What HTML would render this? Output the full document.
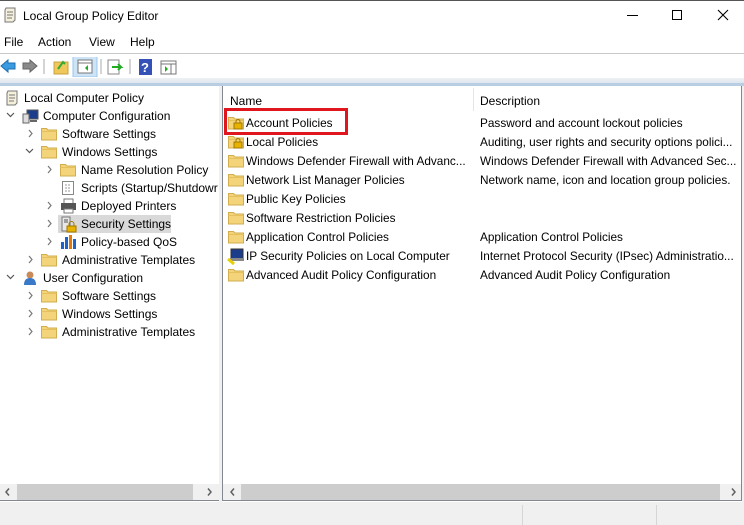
<!DOCTYPE html>
<html><head><style>
*{margin:0;padding:0;box-sizing:border-box}
body{width:744px;height:525px;background:#fff;font-family:"Liberation Sans",sans-serif;font-size:12px;color:#000;position:relative;overflow:hidden}
.abs{position:absolute}
.t{position:absolute;white-space:nowrap;line-height:16px}
</style></head><body>
<div class="abs" style="left:0;top:0;width:744px;height:1px;background:#555"></div>
<!-- title -->
<svg class="abs" style="left:3px;top:7px" width="14" height="16" viewBox="0 0 14 16"><path d="M3 1h9v12l-2 2H2V3z" fill="#f5f0dc" stroke="#777"/><path d="M4 5h6M4 8h6M4 11h5" stroke="#777"/></svg>
<div class="t" style="left:23px;top:8px">Local Group Policy Editor</div>
<div class="abs" style="left:627px;top:15px;width:11px;height:1px;background:#000"></div>
<div class="abs" style="left:672px;top:10px;width:10px;height:10px;border:1px solid #000"></div>
<svg class="abs" style="left:717px;top:9px" width="12" height="12"><path d="M1 1L11 11M11 1L1 11" stroke="#000" stroke-width="1.1"/></svg>
<!-- menu -->
<div class="t" style="left:4px;top:34px">File</div>
<div class="t" style="left:38px;top:34px">Action</div>
<div class="t" style="left:89px;top:34px">View</div>
<div class="t" style="left:130px;top:34px">Help</div>
<div class="abs" style="left:0;top:53px;width:744px;height:1px;background:#c8c8c8"></div>
<!-- toolbar -->
<svg class="abs" style="left:0;top:57px" width="190" height="20">
<path d="M1 9l7-6v3h7v6H8v3z" fill="#3a9be0" stroke="#1f6fb0"/>
<path d="M37 9l-7-6v3h-7v6h7v3z" fill="#8a8a8a" stroke="#666"/>
<path d="M44 2v15" stroke="#aaa"/>
<rect x="54" y="5" width="14" height="12" fill="#f0c85a" stroke="#c9a040"/><path d="M58 12l5-7 2 2" stroke="#3a3" stroke-width="2" fill="none"/>
<rect x="73" y="-2" width="24" height="22" fill="#cde4f7" stroke="#99c6ec"/>
<rect x="78" y="3" width="14" height="13" fill="#fff" stroke="#777"/><path d="M78 6h14" stroke="#777"/><path d="M88 8l-3 3 3 3z" fill="#2a2"/>
<path d="M101 2v15" stroke="#aaa"/>
<rect x="108" y="3" width="11" height="14" fill="#fff" stroke="#888"/><path d="M112 10h9l-3-3M121 10l-3 3" stroke="#2a2" stroke-width="2" fill="none"/>
<path d="M130 2v15" stroke="#aaa"/>
<rect x="139" y="2" width="13" height="16" fill="#3451b8"/><text x="141" y="15" fill="#fff" font-size="13" font-weight="bold" font-family="Liberation Sans">?</text>
<rect x="161" y="4" width="15" height="13" fill="#fff" stroke="#777"/><path d="M161 7h15M171 7v10" stroke="#777"/><path d="M165 9l3 3-3 3z" fill="#2a2"/>
</svg>
<div class="abs" style="left:0;top:78px;width:744px;height:5px;background:linear-gradient(#eef1f4,#dde6ef)"></div>
<div class="abs" style="left:0;top:83px;width:744px;height:3px;background:#b9cde3"></div>
<!-- left pane -->
<div class="abs" style="left:0;top:86px;width:220px;height:415px;border:1px solid #828790;border-top:none;border-left:none;background:#fff"></div>
<div class="abs" style="left:219px;top:86px;width:3px;height:416px;background:#f0f0f0"></div>
<!-- right pane -->
<div class="abs" style="left:222px;top:86px;width:520px;height:415px;border:1px solid #828790;border-top:none;background:#fff"></div>
<div class="abs" style="left:742px;top:86px;width:2px;height:416px;background:#f0f0f0"></div>

<!-- tree -->
<svg class="abs" style="left:5px;top:90px" width="14" height="16"><path d="M3 1h9v12l-2 2H2V3z" fill="#f5f0dc" stroke="#777"/><path d="M4 5h6M4 8h6M4 11h5" stroke="#777"/></svg>
<div class="t" style="left:24px;top:90px">Local Computer Policy</div>

<svg class="abs" style="left:22px;top:108px" width="17" height="16"><rect x="5" y="2" width="11" height="9" fill="#1c3e8a" stroke="#555"/><rect x="1" y="6" width="6" height="9" fill="#ddd" stroke="#666"/><path d="M8 13h7" stroke="#666" stroke-width="2"/></svg>
<div class="t" style="left:43px;top:108px">Computer Configuration</div>

<div class="t" style="left:62px;top:126px">Software Settings</div>
<div class="t" style="left:62px;top:144px">Windows Settings</div>
<div class="t" style="left:81px;top:162px">Name Resolution Policy</div>
<svg class="abs" style="left:61px;top:180px" width="14" height="16"><rect x="1.5" y="1.5" width="11" height="13" fill="#fff" stroke="#888"/><path d="M4 5h6M4 8h6M4 11h6" stroke="#999" stroke-dasharray="2 1"/></svg>
<div class="t" style="left:81px;top:180px">Scripts (Startup/Shutdowr</div>
<svg class="abs" style="left:60px;top:198px" width="17" height="16"><rect x="4" y="1" width="9" height="5" fill="#fff" stroke="#777"/><rect x="1" y="5" width="15" height="7" fill="#555"/><rect x="4" y="11" width="9" height="4" fill="#fff" stroke="#777"/></svg>
<div class="t" style="left:81px;top:198px">Deployed Printers</div>
<div class="abs" style="left:58px;top:215px;width:113px;height:18px;background:#d9d9d9"></div>
<svg class="abs" style="left:60px;top:216px" width="17" height="17"><rect x="2" y="1" width="8" height="14" fill="#e8e8e8" stroke="#777"/><path d="M4 4h4M4 6h4" stroke="#555"/><rect x="7" y="10" width="9" height="6" fill="#e8b200" stroke="#a07800"/><path d="M9 10V8a2.5 2.5 0 015 0v2" stroke="#a07800" fill="none"/></svg>
<div class="t" style="left:81px;top:216px">Security Settings</div>
<svg class="abs" style="left:60px;top:234px" width="17" height="16"><rect x="1" y="8" width="3" height="7" fill="#1e64c8"/><rect x="5" y="3" width="3" height="12" fill="#1e64c8"/><rect x="9" y="1" width="3" height="14" fill="#e07a10"/><rect x="13" y="5" width="3" height="10" fill="#1e64c8"/></svg>
<div class="t" style="left:81px;top:234px">Policy-based QoS</div>
<div class="t" style="left:62px;top:252px">Administrative Templates</div>
<svg class="abs" style="left:22px;top:270px" width="17" height="16"><circle cx="8" cy="5" r="3.5" fill="#c98a5a"/><path d="M2 15q0-7 6-7t6 7z" fill="#3a78c8"/></svg>
<div class="t" style="left:43px;top:270px">User Configuration</div>
<div class="t" style="left:62px;top:288px">Software Settings</div>
<div class="t" style="left:62px;top:306px">Windows Settings</div>
<div class="t" style="left:62px;top:324px">Administrative Templates</div>

<svg class="abs" style="left:0;top:86px" width="219" height="260">
<defs><g id="f"><path d="M0.5 2.5h5l1.5 1.5h8.5v10h-15z" fill="#f3d47a" stroke="#d1ad4e"/><path d="M0.5 5.5h15" stroke="#e6c05c"/></g>
<path id="cr" d="M0 0l3 3.5-3 3.5" fill="none" stroke="#777" stroke-width="1.2"/>
<path id="cd" d="M0 0l3.5 3.5 3.5-3.5" fill="none" stroke="#555" stroke-width="1.2"/></defs>
<use href="#cr" x="29" y="44"/><use href="#f" x="41" y="40"/>
<use href="#cd" x="26" y="63"/><use href="#f" x="41" y="58"/>
<use href="#cr" x="48" y="80"/><use href="#f" x="60" y="76"/>
<use href="#cr" x="48" y="116"/>
<use href="#cr" x="48" y="134"/>
<use href="#cr" x="48" y="152"/>
<use href="#cr" x="29" y="170"/><use href="#f" x="41" y="166"/>
<use href="#cr" x="29" y="206"/><use href="#f" x="41" y="202"/>
<use href="#cr" x="29" y="224"/><use href="#f" x="41" y="220"/>
<use href="#cr" x="29" y="242"/><use href="#f" x="41" y="238"/>
<use href="#cd" x="7" y="27"/><use href="#cd" x="7" y="189"/>
</svg>

<!-- right list -->
<div class="t" style="left:230px;top:93px">Name</div>
<div class="abs" style="left:473px;top:88px;width:1px;height:23px;background:#e5e5e5"></div>
<div class="t" style="left:480px;top:93px">Description</div>
<svg class="abs" style="left:226px;top:113px" width="20" height="175">
<defs><g id="g"><path d="M0.5 2.5h5l1.5 1.5h8.5v10h-15z" fill="#f3d47a" stroke="#d1ad4e"/><path d="M0.5 5.5h15" stroke="#e6c05c"/></g>
<g id="lk"><rect x="8" y="8" width="8" height="6" fill="#e8b200" stroke="#a07800"/><path d="M10 8V6.5a2 2 0 014 0V8" stroke="#a07800" fill="none"/></g></defs>
<use href="#g" x="2" y="2"/><use href="#lk" x="0" y="2"/>
<use href="#g" x="2" y="21"/><use href="#lk" x="0" y="21"/>
<use href="#g" x="2" y="40"/><use href="#g" x="2" y="59"/><use href="#g" x="2" y="78"/><use href="#g" x="2" y="97"/><use href="#g" x="2" y="116"/>
<rect x="5" y="136" width="12" height="10" fill="#1c3e8a" stroke="#333"/><rect x="4" y="145" width="14" height="3" fill="#888"/><path d="M2 146l6 5" stroke="#e8d000" stroke-width="3"/>
<use href="#g" x="2" y="154"/>
</svg>
<div style="position:absolute;left:0;top:0;font-size:11.8px">
<div class="t" style="left:246px;top:115px">Account Policies</div>
<div class="t" style="left:246px;top:134px">Local Policies</div>
<div class="t" style="left:246px;top:153px">Windows Defender Firewall with Advanc...</div>
<div class="t" style="left:246px;top:172px">Network List Manager Policies</div>
<div class="t" style="left:246px;top:191px">Public Key Policies</div>
<div class="t" style="left:246px;top:210px">Software Restriction Policies</div>
<div class="t" style="left:246px;top:229px">Application Control Policies</div>
<div class="t" style="left:246px;top:248px">IP Security Policies on Local Computer</div>
<div class="t" style="left:246px;top:267px">Advanced Audit Policy Configuration</div>
<div class="t" style="left:480px;top:115px">Password and account lockout policies</div>
<div class="t" style="left:480px;top:134px">Auditing, user rights and security options polici...</div>
<div class="t" style="left:480px;top:153px">Windows Defender Firewall with Advanced Sec...</div>
<div class="t" style="left:480px;top:172px">Network name, icon and location group policies.</div>
<div class="t" style="left:480px;top:229px">Application Control Policies</div>
<div class="t" style="left:480px;top:248px">Internet Protocol Security (IPsec) Administratio...</div>
<div class="t" style="left:480px;top:267px">Advanced Audit Policy Configuration</div>
</div>
<div class="abs" style="left:224px;top:108px;width:124px;height:27px;border:3px solid #e0161f"></div>

<!-- scrollbars -->
<div class="abs" style="left:0;top:484px;width:219px;height:16px;background:#f0f0f0"></div>
<div class="abs" style="left:17px;top:484px;width:176px;height:16px;background:#cdcdcd"></div>
<div class="abs" style="left:223px;top:484px;width:518px;height:16px;background:#f0f0f0"></div>
<div class="abs" style="left:241px;top:484px;width:479px;height:16px;background:#cdcdcd"></div>
<svg class="abs" style="left:0;top:484px" width="744" height="16"><g fill="none" stroke="#606060" stroke-width="1.5"><path d="M9 4.5l-3 3.5 3 3.5"/><path d="M208 4.5l3 3.5-3 3.5"/><path d="M234 4.5l-3 3.5 3 3.5"/><path d="M732 4.5l3 3.5-3 3.5"/></g></svg>
<!-- status -->
<div class="abs" style="left:0;top:502px;width:744px;height:23px;background:#f0f0f0"></div>
<div class="abs" style="left:522px;top:505px;width:1px;height:20px;background:#d6d6d6"></div>
<div class="abs" style="left:656px;top:505px;width:1px;height:20px;background:#d6d6d6"></div>
</body></html>
